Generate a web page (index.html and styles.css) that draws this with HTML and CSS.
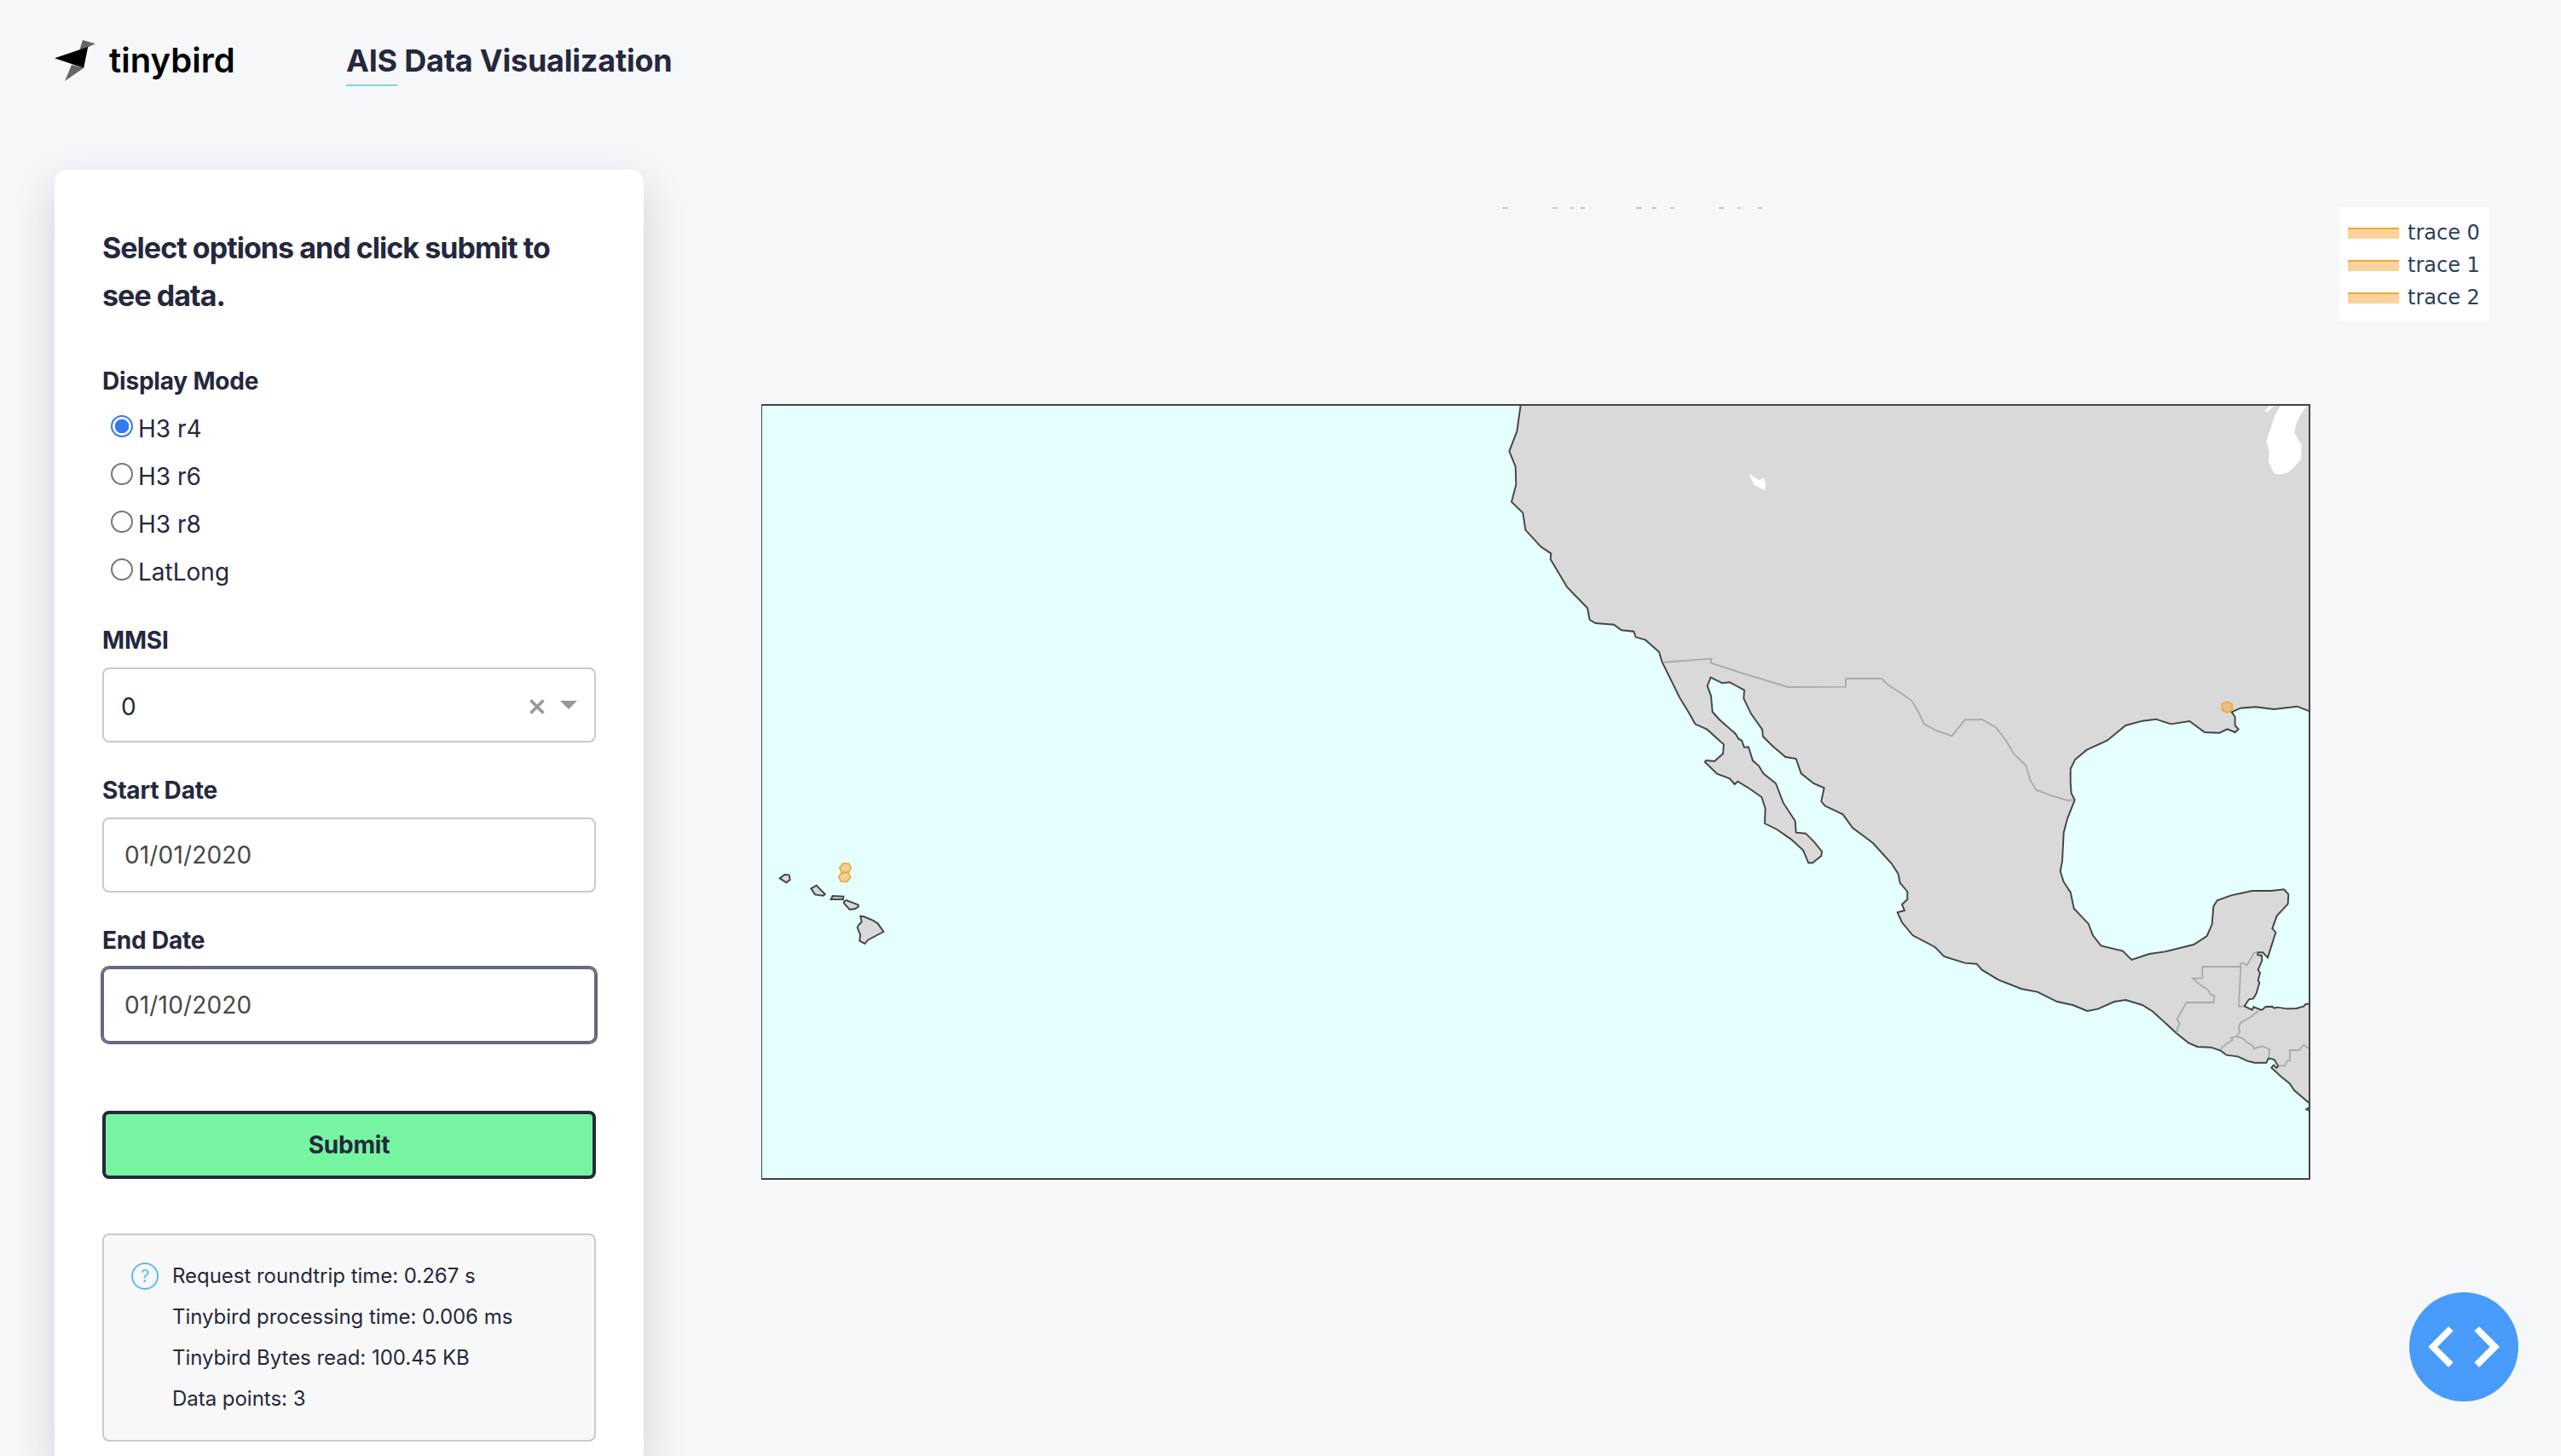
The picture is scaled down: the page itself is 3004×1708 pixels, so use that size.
FILE: index.html
```html
<!DOCTYPE html>
<html lang="en">
<head>
<meta charset="utf-8">
<title>AIS Data Visualization</title>
<link rel="stylesheet" href="styles.css">
</head>
<body>
<header class="header">
  <div class="logo">
    <svg class="logo-mark" viewBox="64 47 48 48" aria-hidden="true">
      <path fill="#666" d="M97 47 112 51.3 103 55.4 92.500 61zM84 76 98.200 79.700 76.200 95z"/>
      <path d="M64 68.300 103.200 55 98.200 79.700z"/>
    </svg>
    <span class="logo-name">tinybird</span>
  </div>
  <h1 class="title"><span class="title-mark">AIS</span> Data Visualization</h1>
</header>
<main class="main">
  <form class="card">
    <h2 class="card-title">Select options and click submit to see data.</h2>
    <div class="label">Display Mode</div>
    <div class="radios">
      <label class="radio"><span class="dot dot-on"></span>H3 r4</label>
      <label class="radio"><span class="dot"></span>H3 r6</label>
      <label class="radio"><span class="dot"></span>H3 r8</label>
      <label class="radio"><span class="dot"></span>LatLong</label>
    </div>
    <div class="label">MMSI</div>
    <div class="field select">
      <span class="select-value">0</span>
      <svg class="clear" viewBox="0 0 18 18"><path d="M1.500 1.500 16.500 16.500M16.500 1.500 1.500 16.500"/></svg>
      <svg class="caret" viewBox="0 0 20 10"><path d="M0 0H20L10 10z"/></svg>
    </div>
    <div class="label">Start Date</div>
    <div class="field">01/01/2020</div>
    <div class="label">End Date</div>
    <div class="field field-focus">01/10/2020</div>
    <button class="submit" type="button">Submit</button>
    <div class="info">
      <span class="info-icon">?</span>
      <div class="info-lines">
        <div>Request roundtrip time: 0.267 s</div>
        <div>Tinybird processing time: 0.006 ms</div>
        <div>Tinybird Bytes read: 100.45 KB</div>
        <div>Data points: 3</div>
      </div>
    </div>
  </form>
  <section class="chart">
    <svg class="ticks" viewBox="0 0 308 2" aria-hidden="true"><path d="M0 1h7M59 1h6M80 1h4M92 1h5M157 1h7M176 1h5M197 1h5M254 1h6M276 1h4M300 1h5"/></svg>
    <svg class="map" viewBox="39 42 5451 2730" role="img" aria-label="Map of vessel positions">
      <rect class="sea" x="39" y="45" width="5448" height="2724"/>
      <path class="land" d="M2714 20L2711 46L2698 138L2671 208L2693 262L2695 326L2679 386L2719 425L2728 485L2782 544L2818 568L2816 588L2875 687L2946 760L2954 801L2974 813L3039 818L3066 838L3109 842L3116 862L3150 872L3198 914L3209 950L3240 1013L3270 1074L3303 1128L3325 1168L3367 1187L3426 1240L3423 1273L3393 1299L3364 1296L3359 1301L3402 1343L3447 1360L3464 1380L3475 1370L3516 1395L3559 1425L3572 1465L3570 1518L3613 1539L3662 1573L3705 1612L3724 1657L3738 1657L3769 1632L3771 1617L3744 1583L3714 1553L3680 1550L3677 1509L3635 1445L3609 1377L3565 1342L3549 1315L3528 1297L3513 1249L3498 1250L3489 1226L3478 1220L3467 1202L3410 1152L3386 1125L3381 1069L3368 1034L3380 1004L3420 1024L3447 1021L3498 1049L3496 1078L3522 1132L3561 1187L3564 1212L3597 1245L3643 1284L3680 1290L3698 1342L3742 1377L3779 1393L3769 1440L3782 1456L3845 1486L3879 1533L3951 1587L4017 1660L4040 1696L4046 1727L4072 1758L4072 1785L4053 1803L4062 1824L4037 1831L4053 1866L4091 1912L4169 1953L4201 1986L4274 2009L4316 2012L4334 2033L4392 2068L4473 2100L4530 2111L4599 2145L4654 2157L4705 2178L4742 2171L4800 2145L4840 2139L4899 2157L4936 2180L5022 2259L5061 2290L5093 2304L5141 2306L5175 2318L5195 2333L5235 2338L5267 2353L5294 2360L5335 2360L5343 2344L5363 2349L5377 2372L5371 2378L5361 2368L5353 2377L5387 2409L5417 2433L5434 2458L5487 2503L5520 2530L5520 2154L5474 2153L5467 2161L5441 2169L5409 2170L5373 2165L5363 2168L5356 2162L5333 2163L5319 2175L5290 2164L5285 2174L5258 2161L5274 2137L5289 2134L5300 2116L5311 2078L5306 2070L5313 2044L5306 2033L5320 2000L5319 1982L5305 1981L5305 1972L5323 1972L5340 1990L5368 1901L5356 1888L5372 1843L5411 1801L5413 1767L5397 1750L5352 1755L5285 1755L5211 1771L5162 1789L5149 1810L5144 1873L5126 1914L5080 1944L4978 1969L4923 1977L4861 1998L4830 1967L4753 1948L4725 1912L4709 1871L4658 1817L4646 1760L4622 1724L4610 1686L4617 1650L4622 1550L4635 1501L4661 1435L4649 1412L4646 1375L4646 1326L4662 1293L4703 1259L4775 1226L4840 1173L4899 1157L4947 1151L4999 1168L5065 1158L5118 1197L5170 1199L5198 1186L5225 1197L5237 1186L5225 1173L5225 1143L5213 1126L5244 1112L5297 1108L5362 1116L5444 1106L5487 1123L5520 1136L5520 20z"/>
      <path class="land" d="M5500 2508L5476 2524L5500 2536z"/>
      <g transform="translate(0 1590)">
        <path class="land" d="M104 121L121 108L137 109L140 126L127 136zM214 157L233 146L263 177L257 182L228 178zM290 183L328 185L327 195L284 195zM330 203L338 198L380 214L381 220L370 228L350 231L330 209zM388 254L398 255L430 268L449 280L469 309L414 338L403 351L385 341L387 319L377 294L381 286L392 275z"/>
      </g>
      <path class="lake" d="M3515 288L3550 310L3567 303L3573 324L3569 345L3532 326zM5387 45L5366 80L5335 173L5345 208L5343 245L5362 286L5375 289L5393 289L5415 280L5428 269L5457 236L5459 186L5434 143L5440 110L5458 75L5480 45zM5330 66L5336 72L5366 46L5350 46zM5482 2450L5486 2450L5486 2466z"/>
      <path class="border" d="M3212 951L3383 938L3379 953L3500 992L3652 1038L3855 1037L3855 1008L3981 1008L4006 1032L4048 1058L4088 1087L4111 1125L4130 1167L4169 1189L4229 1210L4274 1153L4335 1152L4384 1180L4419 1226L4447 1273L4489 1314L4504 1365L4525 1400L4585 1422L4636 1437L4657 1435M5021 2256L5022 2240L5030 2222L5021 2207L5054 2148L5150 2148L5152 2124L5139 2120L5130 2104L5103 2086L5076 2063L5110 2062L5110 2022L5245 2022L5238 2162L5255 2161M5245 2022L5243 2011L5252 2009L5267 2017L5292 1973L5302 1972M5308 2177L5280 2199L5244 2220L5238 2235L5242 2251L5230 2268L5210 2273L5217 2280L5200 2290L5177 2307L5175 2315M5230 2268L5252 2274L5266 2287L5286 2300L5291 2310L5322 2302L5347 2313L5343 2341M5378 2371L5401 2370L5409 2353L5418 2352L5418 2316L5450 2316L5466 2297L5487 2311"/>
      <path class="cell" d="M5197 1089L5215 1098L5215 1118L5197 1128L5179 1118L5179 1098z"/>
      <path class="cell" d="M327 1658L348 1660L355 1676L345 1690L323 1690L314 1674z"/>
      <path class="cell" d="M322 1691L345 1690L353 1708L341 1723L319 1722L311 1706z"/>
      <rect class="frame" x="39" y="45" width="5448" height="2724"/>
    </svg>
  </section>
  <aside class="legend">
    <div class="legend-row"><span class="swatch"></span>trace 0</div>
    <div class="legend-row"><span class="swatch"></span>trace 1</div>
    <div class="legend-row"><span class="swatch"></span>trace 2</div>
  </aside>
</main>
<div class="debug">
  <svg viewBox="138 108 384 384" aria-hidden="true"><path d="M276 228 293 244 237 300 293 355 276 372 205 300zM384 228 456 300 384 372 367 355 422 300 367 244z"/></svg>
</div>
</body>
</html>
```
FILE: styles.css
```css
* { box-sizing: border-box; }
html, body { margin: 0; height: 100%; overflow: hidden; }
body {
  background: #f6f7f9;
  color: #25283d;
  font: 400 28px/56px Inter, "Liberation Sans", sans-serif;
}
svg { display: block; }

.header { display: flex; height: 199px; padding: 44px 0 0 64px; }
.logo { display: flex; width: 342px; }
.logo-mark { width: 48px; height: 48px; margin: 3px 16px 0 0; }
.logo-name { color: #000; font-size: 40px; font-weight: 600; line-height: 54px; letter-spacing: 0.050px; }
.title { margin: 0; font-size: 36px; font-weight: 700; line-height: 54px; letter-spacing: -0.220px; }
.title-mark {
  display: inline-block;
  height: 57px;
  background: linear-gradient(90deg, #7cd1f5, #84dcb0) bottom / 100% 2px no-repeat;
}

.main { display: flex; align-items: flex-start; height: 1509px; }
.card {
  flex: none;
  width: 691px;
  height: 1509px;
  margin-left: 64px;
  padding: 64px 56px 0;
  border-radius: 16px 16px 0 0;
  background: #fff;
  box-shadow: 0 20px 50px rgba(37, 40, 61, .18);
}
.card-title { margin: 0 0 44px; font-size: 34px; font-weight: 700; line-height: 56px; letter-spacing: -0.960px; }
.label { height: 56px; font-weight: 700; letter-spacing: -0.200px; }
.radios { margin-bottom: 24px; }
.radio { display: flex; align-items: center; height: 56px; padding-left: 10px; }
.dot { width: 26px; height: 26px; margin: -7px 6px 0 0; border: 2px solid #767676; border-radius: 50%; }
.dot-on { border-color: #3478f6; background: radial-gradient(circle, #3478f6 8px, #fff 8.500px); }
.field {
  display: flex;
  align-items: center;
  height: 88px;
  margin: 4px 0 28px;
  padding: 0 24px;
  border: 2px solid #c9c9d1;
  border-radius: 8px;
  color: #484848;
  letter-spacing: 0.150px;
}
.select { padding: 3px 20px 0; color: #25283d; }
.select-value { flex: 1; }
.clear { width: 18px; height: 18px; margin-right: 18px; fill: none; stroke: #999; stroke-width: 3.600; }
.caret { width: 20px; height: 10px; margin-top: -4px; fill: #999; }
.field-focus { border-color: #66687b; box-shadow: 0 0 0 2px #66687b; }
.submit {
  display: block;
  width: 100%;
  height: 80px;
  margin: 80px 0 64px;
  border: 4px solid #25283d;
  border-radius: 8px;
  background: #77f4a1;
  color: #25283d;
  font: 700 28px/40px Inter, "Liberation Sans", sans-serif;
  letter-spacing: -0.200px;
}
.info {
  display: flex;
  gap: 16px;
  height: 244px;
  padding: 24px 32px;
  border: 2px solid #c9c9d1;
  border-radius: 8px;
  background: #f8f8f8;
  font-size: 24px;
  line-height: 48px;
}
.info-lines { letter-spacing: -0.030px; }
.info-icon {
  width: 32px;
  height: 32px;
  margin-top: 8px;
  border: 2px solid #5bbcf8;
  border-radius: 50%;
  color: #5bbcf8;
  font-size: 20px;
  line-height: 29px;
  text-align: center;
}

.chart { flex: none; width: 1817px; margin: 44px 0 0 138px; }
.ticks { width: 308px; height: 2px; margin: 0 0 229px 869px; fill: none; stroke: #b9bbc0; stroke-width: 1.500; }
.map { width: 1817px; height: 910px; }
.sea { fill: #e5ffff; }
.land { fill: #d9d9d9; stroke: #444; stroke-width: 5.800; }
.lake { fill: #fff; }
.border { fill: none; stroke: #aaa; stroke-width: 5.500; }
.cell { fill: rgba(245, 167, 50, .5); stroke: #f4a738; stroke-width: 5; }
.frame { fill: none; stroke: #444; stroke-width: 6; }

.legend {
  flex: none;
  width: 176px;
  height: 134px;
  margin: 44px 0 0 34px;
  padding: 11px 10px 9px;
  background: #fff;
  color: #2a3f5f;
  font: 24px/38px "DejaVu Sans", sans-serif;
}
.legend-row { display: flex; align-items: center; height: 38px; white-space: nowrap; }
.swatch { width: 60px; height: 13px; margin: 0 10px 0 0; border-top: 2px solid #f3a73b; background: #f9d39b; }

.debug { position: fixed; right: 50px; bottom: 64px; width: 128px; height: 128px; border-radius: 50%; background: #489bf9; }
.debug svg { width: 128px; height: 128px; fill: #fff; }
```
